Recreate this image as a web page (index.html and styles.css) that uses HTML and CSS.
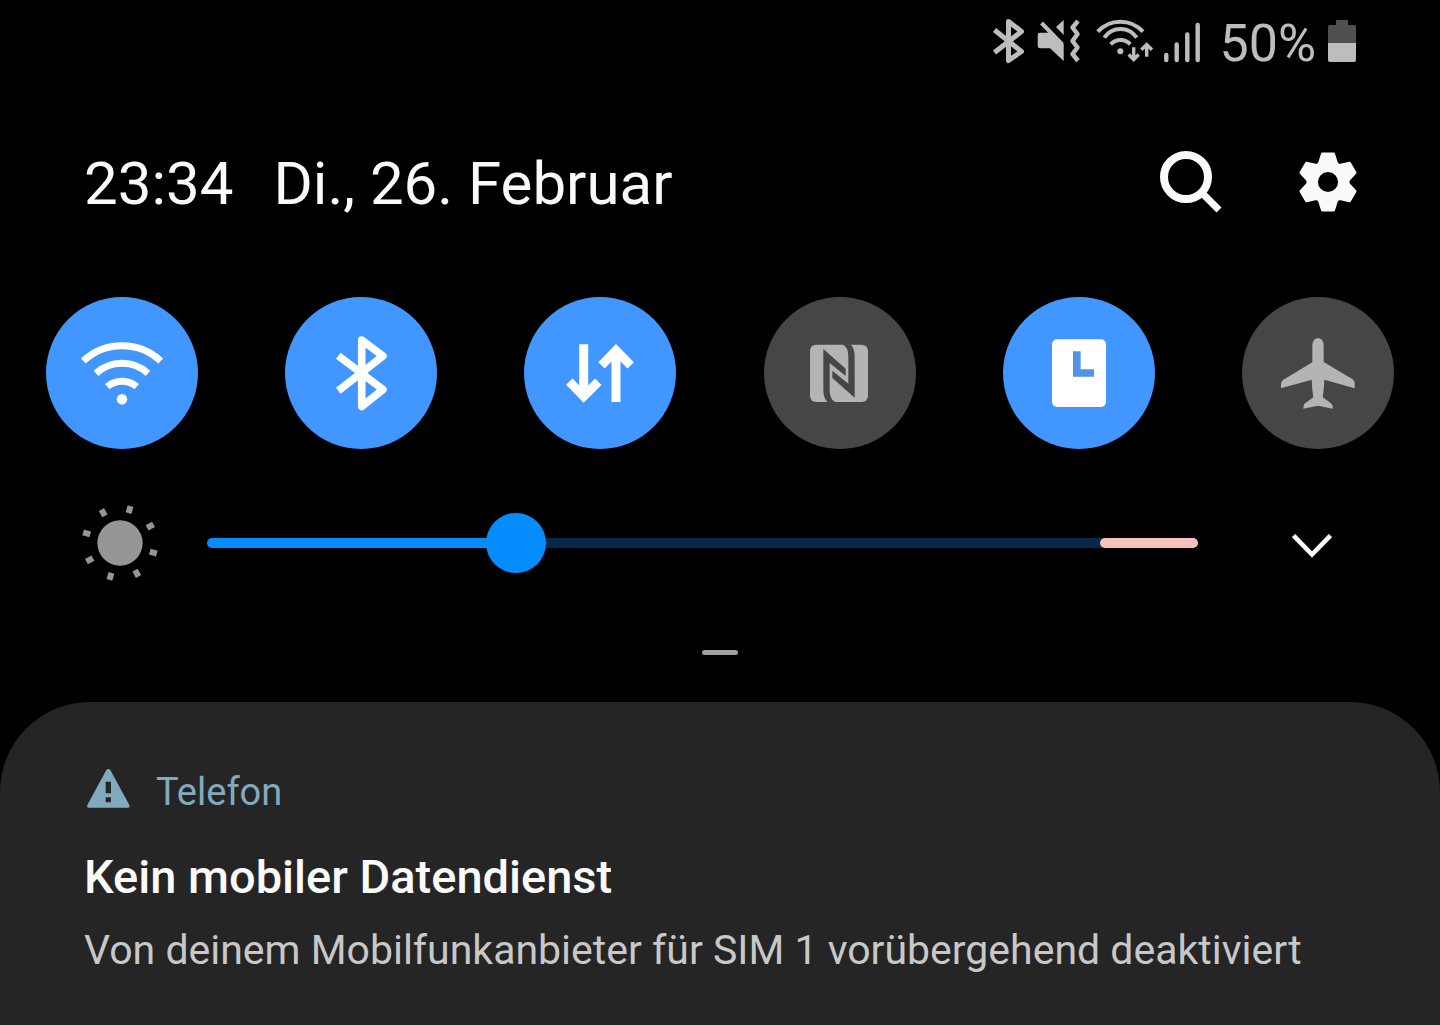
FILE: index.html
```html
<!DOCTYPE html>
<html lang="de">
  <head>
    <meta charset="UTF-8" />
    <meta name="viewport" content="width=device-width, initial-scale=1.0" />
    <title>Schnelleinstellungen</title>
    <link rel="stylesheet" href="styles.css">
  </head>
  <body>
    <!-- Status bar -->
    <div class="status-bar">
      <svg class="line-icon" width="36" height="46" viewBox="0 0 36 46" stroke-width="5" stroke-linejoin="round" aria-hidden="true">
        <path d="M3.5 11L30.5 32.5L17.5 41.5V2.5L30.5 12.5L3.5 33.5" />
      </svg>
      <svg width="48" height="46" viewBox="0 0 48 46" aria-hidden="true">
        <path fill="currentColor" d="M5 13.7H15L28.7 25V42L15 29.3H5Q2.7 29.3 2.7 27V16Q2.7 13.7 5 13.7ZM28.7 1V16L21 8Z" />
        <path class="line-icon" stroke-width="4" d="M6.5 4L27.3 25.5" />
        <path class="line-icon" stroke-width="4.5" stroke-linejoin="round" d="M43 2L37.5 8.5L42.5 15L37.5 22L42.5 28.5L37.5 35L43 41.7" />
      </svg>
      <svg class="line-icon" width="64" height="46" viewBox="-4 0 64 46" stroke-width="4" aria-hidden="true">
        <path d="M2.7 12.7A30.6 30.6 0 0 1 48 12.7M9.3 18.7A19.4 19.4 0 0 1 41.7 18.7M15.7 25.3A13.3 13.3 0 0 1 35.3 25.3" />
        <circle cx="25.3" cy="32.3" r="3" fill="currentColor" stroke="none" />
        <path stroke-width="3.4" d="M38.7 28.3V40M33.7 35.5L38.7 40.5L43.7 35.5M51.7 37.7V26M46.3 30.7L51.7 25.5L57 30.7" />
      </svg>
      <svg class="line-icon" width="38" height="46" viewBox="0 0 38 46" stroke-width="4.4" stroke-linecap="round" aria-hidden="true">
        <path d="M3.3 36V41M13.7 25.5V41M24.3 15.5V41M34.7 6V41" />
      </svg>
      <span class="battery-level">50%</span>
      <svg width="28" height="46" viewBox="0 0 28 46" aria-hidden="true">
        <path fill="#505050" d="M8 1H20V6H26Q28 6 28 8V24H0V8Q0 6 2 6H8Z" />
        <path fill="currentColor" d="M0 24H28V41Q28 43 26 43H2Q0 43 0 41Z" />
      </svg>
    </div>

    <!-- Time, date and actions -->
    <header class="panel-header">
      <div class="clock">
        <time>23:34</time>
        <span>Di., 26. Februar</span>
      </div>
      <div class="actions">
        <button type="button" aria-label="Suchen">
          <svg width="62" height="62" viewBox="0 0 62 62" fill="none" stroke="currentColor">
            <circle cx="26" cy="26" r="22" stroke-width="8" />
            <path stroke-width="7" d="M41.5 41.5L59 59" />
          </svg>
        </button>
        <button type="button" aria-label="Einstellungen">
          <svg width="60" height="60" viewBox="-30 -30 60 60" fill="currentColor" stroke="currentColor">
            <defs>
              <path id="tooth" stroke-width="3" stroke-linejoin="round" d="M-5.5 -28H5.5L8.5 -18.5H-8.5Z" />
            </defs>
            <circle r="15.8" fill="none" stroke-width="11.5" />
            <use href="#tooth" />
            <use href="#tooth" transform="rotate(60)" />
            <use href="#tooth" transform="rotate(120)" />
            <use href="#tooth" transform="rotate(180)" />
            <use href="#tooth" transform="rotate(240)" />
            <use href="#tooth" transform="rotate(300)" />
          </svg>
        </button>
      </div>
    </header>

    <!-- Quick toggles -->
    <div class="toggles">
      <button class="toggle on" type="button" aria-pressed="true" aria-label="WLAN">
        <svg class="line-icon" viewBox="0 0 152 152" stroke-width="7">
          <path d="M37.3 64A56.6 56.6 0 0 1 114.7 64M50 76.3A38.8 38.8 0 0 1 102 76.3M61.3 89.7A22.7 22.7 0 0 1 90.7 89.7" />
          <circle cx="76" cy="102.3" r="5.2" fill="currentColor" stroke="none" />
        </svg>
      </button>
      <button class="toggle on" type="button" aria-pressed="true" aria-label="Bluetooth">
        <svg class="line-icon" viewBox="0 0 152 152" stroke-width="7.6" stroke-linejoin="round">
          <path d="M53.3 58.7L98 92.5L76.7 109.5V43L98 59L53.3 93.7" />
        </svg>
      </button>
      <button class="toggle on" type="button" aria-pressed="true" aria-label="Mobile Daten">
        <svg class="line-icon" viewBox="0 0 152 152" stroke-width="9">
          <path d="M59.7 47.3V99M45.3 84.7L59.7 99.3L74.3 84.7M92 105V54M77.5 68.3L92 53.4L106.7 68.3" />
        </svg>
      </button>
      <button class="toggle" type="button" aria-pressed="false" aria-label="NFC">
        <svg viewBox="12 21 456 456">
          <rect x="150" y="164" width="174" height="172" rx="18" fill="currentColor" />
          <path fill="#464646" d="M190 177L257 236V258L209 219V300Q209 328 226 337H203Q190 325 190 300ZM284 323L217 264V242L265 281V200Q265 172 248 163H271Q284 175 284 200Z" />
        </svg>
      </button>
      <button class="toggle on" type="button" aria-pressed="true" aria-label="Always On Display">
        <svg viewBox="6 21 456 456">
          <rect x="153" y="148" width="162" height="203" rx="15" fill="currentColor" />
          <path fill="#4f94e6" d="M216 184H239V238H279V260H216Z" />
        </svg>
      </button>
      <button class="toggle" type="button" aria-pressed="false" aria-label="Flugmodus">
        <svg viewBox="18 21 456 456">
          <path fill="currentColor" d="M246 144Q263 146 263 166V216L345 265Q356 271 356 280V295L265 269Q264 300 260 322L284 339Q291 344 290 356L246 347L202 356Q202 343 208 339L232 322Q228 300 227 269L135 295V283Q136 271 146 267L229 217V166Q229 146 246 144Z" />
        </svg>
      </button>
    </div>

    <!-- Brightness -->
    <div class="brightness">
      <svg class="sun" width="80" height="80" viewBox="-120 -120 240 240" aria-hidden="true">
        <defs>
          <rect id="ray" x="-9" y="-115" width="18" height="22" />
        </defs>
        <circle r="68" />
        <use href="#ray" transform="rotate(16)" />
        <use href="#ray" transform="rotate(61)" />
        <use href="#ray" transform="rotate(106)" />
        <use href="#ray" transform="rotate(151)" />
        <use href="#ray" transform="rotate(196)" />
        <use href="#ray" transform="rotate(241)" />
        <use href="#ray" transform="rotate(286)" />
        <use href="#ray" transform="rotate(331)" />
      </svg>
      <div class="slider">
        <input type="range" min="0" max="100" value="30" aria-label="Helligkeit" />
      </div>
      <button class="expand" type="button" aria-label="Mehr anzeigen">
        <svg width="40" height="24" viewBox="0 0 40 24" fill="none" stroke="currentColor" stroke-width="4.6">
          <path d="M1.5 1.5L20 20.5L38.5 1.5" />
        </svg>
      </button>
    </div>

    <div class="handle"></div>

    <!-- Notification -->
    <main class="notification">
      <div class="app">
        <svg width="48" height="40" viewBox="42 55 144 120" aria-hidden="true">
          <path fill="currentColor" d="M109 61Q115 55 121 61L178 166Q181 174 173 174H57Q49 174 52 166Z" />
          <path fill="#252525" d="M107 96H123V131H107ZM107 143H123V158H107Z" />
        </svg>
        <span>Telefon</span>
      </div>
      <h1>Kein mobiler Datendienst</h1>
      <p>Von deinem Mobilfunkanbieter für SIM 1 vorübergehend deaktiviert</p>
    </main>
  </body>
</html>
```
FILE: styles.css
```css
* {
  box-sizing: border-box;
}
body {
  margin: 0;
  min-height: 100vh;
  display: flex;
  flex-direction: column;
  background: #000;
  color: #fafafa;
  font-family: Roboto, sans-serif;
}
button {
  padding: 0;
  border: none;
  background: none;
  color: inherit;
  cursor: pointer;
}
svg {
  display: block;
  flex-shrink: 0;
}
.line-icon {
  fill: none;
  stroke: currentColor;
}
.status-bar {
  display: flex;
  align-items: center;
  justify-content: flex-end;
  gap: 8px;
  height: 84px;
  padding: 0 84px;
  color: #bdbdbd;
}
.battery-level {
  margin: 0 4px 0 10px;
  padding-top: 4px;
  font-size: 52px;
  line-height: 60px;
}
.panel-header {
  display: flex;
  align-items: center;
  justify-content: space-between;
  height: 196px;
  padding: 0 82px 0 84px;
}
.clock {
  display: flex;
  gap: 40px;
  padding-top: 4px;
  font-size: 60px;
  line-height: 72px;
}
.actions {
  display: flex;
  align-items: center;
  gap: 76px;
}
.toggles {
  display: flex;
  justify-content: space-between;
  padding: 17px 46px 0;
}
.toggle {
  width: 152px;
  height: 152px;
  border-radius: 50%;
  background: #464646;
  color: #b4b4b4;
}
.toggle.on {
  background: #4296ff;
  color: #fff;
}
.brightness {
  display: flex;
  align-items: center;
  margin-top: 54px;
  padding: 0 108px 0 80px;
}
.sun {
  fill: #969696;
}
.slider {
  position: relative;
  flex: 1;
  height: 60px;
  margin: 0 94px 0 47px;
}
.slider::before {
  content: "";
  position: absolute;
  top: 25px;
  left: 0;
  right: 0;
  height: 10px;
  border-radius: 5px;
  background: linear-gradient(to right, #058cff 31%, #05284b 31%);
}
/* warning zone at the bright end of the track */
.slider::after {
  content: "";
  position: absolute;
  top: 25px;
  right: 0;
  width: 98px;
  height: 10px;
  border-radius: 5px;
  background: #f6c1bc;
}
.slider input {
  -webkit-appearance: none;
  appearance: none;
  position: relative;
  z-index: 1;
  display: block;
  width: 100%;
  height: 60px;
  margin: 0;
  background: none;
}
.slider input::-webkit-slider-thumb {
  -webkit-appearance: none;
  width: 60px;
  height: 60px;
  border-radius: 50%;
  background: #058cff;
}
.expand {
  padding-top: 6px;
}
.handle {
  width: 36px;
  height: 5px;
  margin: 67px auto 47px;
  border-radius: 3px;
  background: #a0a0a0;
}
.notification {
  flex: 1;
  padding: 66px 84px 40px;
  border-radius: 90px 90px 0 0;
  background: #252525;
}
.app {
  display: flex;
  align-items: flex-start;
  gap: 24px;
  color: #82aabe;
  font-size: 38px;
  line-height: 48px;
}
h1 {
  margin: 31px 0 0;
  font-size: 47px;
  font-weight: 500;
  line-height: 60px;
}
p {
  margin: 17px 0 0;
  color: #c8c8c8;
  font-size: 41px;
  line-height: 52px;
}
```
